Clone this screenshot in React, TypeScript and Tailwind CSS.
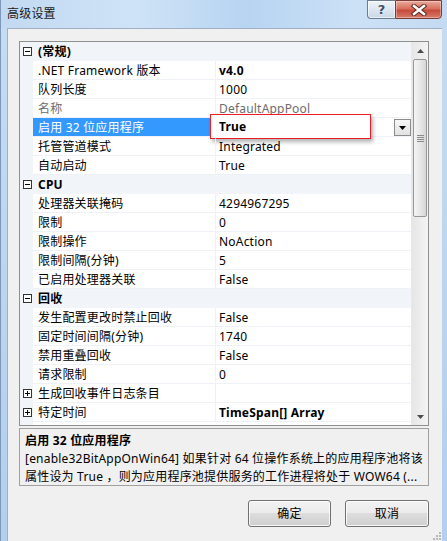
type Row =
  | { type: "cat"; label: string }
  | {
      type: "prop"
      name: string
      value: string
      bold?: boolean
      muted?: boolean
      selected?: boolean
      plus?: boolean
    }

const rows: Row[] = [
  { type: "cat", label: "(常规)" },
  { type: "prop", name: ".NET Framework 版本", value: "v4.0", bold: true },
  { type: "prop", name: "队列长度", value: "1000" },
  { type: "prop", name: "名称", value: "DefaultAppPool", muted: true },
  { type: "prop", name: "启用 32 位应用程序", value: "True", bold: true, selected: true },
  { type: "prop", name: "托管管道模式", value: "Integrated" },
  { type: "prop", name: "自动启动", value: "True" },
  { type: "cat", label: "CPU" },
  { type: "prop", name: "处理器关联掩码", value: "4294967295" },
  { type: "prop", name: "限制", value: "0" },
  { type: "prop", name: "限制操作", value: "NoAction" },
  { type: "prop", name: "限制间隔(分钟)", value: "5" },
  { type: "prop", name: "已启用处理器关联", value: "False" },
  { type: "cat", label: "回收" },
  { type: "prop", name: "发生配置更改时禁止回收", value: "False" },
  { type: "prop", name: "固定时间间隔(分钟)", value: "1740" },
  { type: "prop", name: "禁用重叠回收", value: "False" },
  { type: "prop", name: "请求限制", value: "0" },
  { type: "prop", name: "生成回收事件日志条目", value: "", plus: true },
  { type: "prop", name: "特定时间", value: "TimeSpan[] Array", bold: true, plus: true },
]

function ToggleBox({ open }: { open: boolean }) {
  return (
    <svg width="9" height="9" viewBox="0 0 9 9" className="block">
      <rect x="0.5" y="0.5" width="8" height="8" fill="#fff" stroke="#333" />
      <line x1="2" y1="4.5" x2="7" y2="4.5" stroke="#000" />
      {!open && <line x1="4.5" y1="2" x2="4.5" y2="7" stroke="#000" />}
    </svg>
  )
}

function Arrow({ down }: { down?: boolean }) {
  return (
    <svg width="7" height="4" viewBox="0 0 7 4" className="block">
      <path d={down ? "M0 0H7L3.5 4Z" : "M0 4H7L3.5 0Z"} fill="#4d4d4d" />
    </svg>
  )
}

function GridRow({ row }: { row: Row }) {
  if (row.type === "cat") {
    return (
      <div className="flex h-[19px] bg-[#f1f4f9]">
        <div className="w-[13px] flex items-center justify-center pl-[1px]">
          <ToggleBox open />
        </div>
        <div className="pl-[5px] leading-[19px] font-bold text-black">{row.label}</div>
      </div>
    )
  }
  return (
    <div className="relative flex h-[19px]">
      <div className="w-[13px] shrink-0 bg-[#f1f4f9] flex items-center justify-center pl-[1px]">
        {row.plus && <ToggleBox open={false} />}
      </div>
      <div
        className={`w-[182px] shrink-0 border-b border-[#eef1f5] pl-[5px] leading-[19px] whitespace-nowrap ${
          row.selected ? "bg-[#3399ff] text-white" : row.muted ? "text-[#6d6d6d]" : "text-black"
        }`}
      >
        {row.name}
      </div>
      <div className="w-px shrink-0 bg-[#eef1f5]" />
      <div
        className={`w-[195px] shrink-0 flex justify-between border-b border-[#eef1f5] pl-[3px] leading-[19px] whitespace-nowrap ${
          row.bold ? "font-bold" : ""
        } ${row.muted ? "text-[#6d6d6d]" : "text-black"}`}
      >
        <span>{row.value}</span>
        {row.selected && (
          <div className="mt-[1px] w-[17px] h-[17px] border border-[#8c8c8c] bg-gradient-to-b from-[#f7f7f7] to-[#e2e2e2] flex items-center justify-center">
            <svg width="7" height="4" viewBox="0 0 7 4" className="block">
              <path d="M0 0H7L3.5 4Z" fill="#000" />
            </svg>
          </div>
        )}
      </div>
      {row.selected && (
        <div className="absolute left-[190px] top-[-4px] w-[161px] h-[25px] border-[1.5px] border-[#ee1c25] shadow-[2px_3px_4px_rgba(0,0,0,0.3)] bg-white pl-[8px] pt-[1px] flex items-center font-bold text-black leading-[18px]">
          True
        </div>
      )}
    </div>
  )
}

function Scrollbar() {
  return (
    <div className="w-[17px] shrink-0 flex flex-col bg-gradient-to-r from-[#e6e6e6] to-[#f4f4f4] border-l border-[#e8e8e8]">
      <div className="h-[17px] flex items-center justify-center">
        <Arrow />
      </div>
      <div className="mx-[1px] h-[158px] rounded-[2px] border border-[#979797] bg-gradient-to-r from-[#f4f4f4] via-[#e8e8e8] to-[#d6d6d6] flex flex-col items-center justify-center gap-[1px]">
        <div className="w-[7px] h-px bg-[#8a8a8a]" />
        <div className="w-[7px] h-px bg-[#8a8a8a]" />
        <div className="w-[7px] h-px bg-[#8a8a8a]" />
        <div className="w-[7px] h-px bg-[#8a8a8a]" />
      </div>
      <div className="flex-1" />
      <div className="h-[17px] flex items-center justify-center">
        <Arrow down />
      </div>
    </div>
  )
}

function DialogButton({ label }: { label: string }) {
  return (
    <button className="h-[27px] rounded-[3px] border border-[#707070] shadow-[inset_0_0_0_1px_rgba(255,255,255,0.8)] bg-[linear-gradient(to_bottom,#f2f2f2_0%,#ebebeb_50%,#dddddd_50%,#cfcfcf_100%)] text-[12px] text-black">
      {label}
    </button>
  )
}

export default function App() {
  return (
    <div className="w-[447px] h-[541px] overflow-hidden flex flex-col bg-gradient-to-b from-[#c6dcf2] to-[#b3cfec] font-['Noto_Sans','Noto_Sans_CJK_SC',sans-serif] text-[12px] tracking-[0.2px] border-l border-[#7d98b8]">
      <div className="h-[28px] shrink-0 flex justify-between bg-[linear-gradient(90deg,#c2d9f1_0%,#cfe3f7_30%,#b7d4f1_55%,#cce1f6_80%,#c3daf2_100%)]">
        <div className="pl-[6px] pt-[5px] leading-[18px] text-[12px] text-[#1a1a1a]">高级设置</div>
        <div className="flex mr-[5px] h-[19px]">
          <div className="w-[28px] border border-[#6d7d90] border-r-0 rounded-bl-[4px] bg-gradient-to-b from-[#eef3f9] via-[#dde6f0] to-[#c9d6e5] flex items-center justify-center shadow-[inset_0_0_0_1px_rgba(255,255,255,0.6)]">
            <span className="font-['DejaVu_Sans',sans-serif] font-bold text-[13px] leading-none text-[#3e4f66] [text-shadow:0_0_2px_#fff]">?</span>
          </div>
          <div className="w-[47px] border border-[#7a3a33] rounded-br-[4px] bg-[linear-gradient(to_bottom,#e9a99b_0%,#d9705f_45%,#c84a3b_55%,#d57c6a_100%)] flex items-center justify-center shadow-[inset_0_0_0_1px_rgba(255,255,255,0.35)]">
            <svg width="16" height="12" viewBox="0 0 16 12">
              <path d="M3 2L13 10M13 2L3 10" stroke="#5a2a24" strokeWidth="4.5" strokeLinecap="square" />
              <path d="M3 2L13 10M13 2L3 10" stroke="#fff" strokeWidth="2.5" strokeLinecap="square" />
            </svg>
          </div>
        </div>
      </div>

      <div className="flex-1 ml-[6px] mr-[5px] bg-[#f0f0f0] border-t border-l border-[#9fb0c4] flex flex-col pl-[11px] pr-[12px] pt-[12px]">
        <div className="w-[410px] h-[385px] border border-[#8e8f8f] bg-white flex">
          <div className="w-[391px] flex flex-col">
            {rows.map((row, i) => (
              <GridRow key={i} row={row} />
            ))}
            <div className="flex-1 flex">
              <div className="w-[13px] bg-[#f1f4f9]" />
            </div>
          </div>
          <Scrollbar />
        </div>

        <div className="mt-[2px] w-[410px] h-[58px] border border-[#a0a0a0] pl-[5px] pt-[3px] leading-[18px] text-black whitespace-nowrap">
          <div className="font-bold">启用 32 位应用程序</div>
          <div>[enable32BitAppOnWin64] 如果针对 64 位操作系统上的应用程序池将该</div>
          <div>属性设为 True ，则为应用程序池提供服务的工作进程将处于 WOW64 (...</div>
        </div>

        <div className="mt-[14px] w-[410px] flex justify-end gap-[14px]">
          <div className="w-[83px] flex flex-col">
            <DialogButton label="确定" />
          </div>
          <div className="w-[84px] flex flex-col">
            <DialogButton label="取消" />
          </div>
        </div>

        <div className="flex-1 flex justify-end items-end -mr-[12px]">
          <svg width="8" height="8" viewBox="0 0 8 8" className="block mb-[1px] mr-[1px]">
            <g fill="#b8b8b8">
              <rect x="6" y="0" width="2" height="2" />
              <rect x="3" y="3" width="2" height="2" />
              <rect x="6" y="3" width="2" height="2" />
              <rect x="0" y="6" width="2" height="2" />
              <rect x="3" y="6" width="2" height="2" />
              <rect x="6" y="6" width="2" height="2" />
            </g>
          </svg>
        </div>
      </div>
    </div>
  )
}
